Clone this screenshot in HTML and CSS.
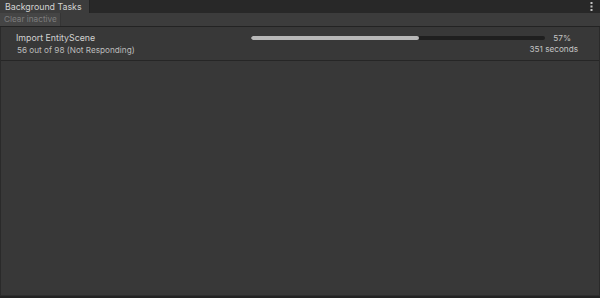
FILE: index.html
```html
<!DOCTYPE html>
<html lang="en">
<head>
<meta charset="UTF-8">
<meta name="viewport" content="width=device-width, initial-scale=1.0">
<title>Background Tasks</title>
<link rel="stylesheet" href="styles.css">
</head>
<body>
<div class="window">
    <div class="tabbar">
        <div class="tab">Background Tasks</div>
        <div class="menu">
            <svg width="3" height="9" viewBox="0 0 3 9">
                <rect x="0.5" y="0" width="2" height="2" fill="#c4c4c4"/>
                <rect x="0.5" y="3.5" width="2" height="2" fill="#c4c4c4"/>
                <rect x="0.5" y="7" width="2" height="2" fill="#c4c4c4"/>
            </svg>
        </div>
    </div>
    <div class="toolbar">
        <div class="btn">Clear inactive</div>
    </div>
    <div class="list">
        <div class="task">
            <div class="task-info">
                <div class="task-name">Import EntityScene</div>
                <div class="task-desc">56 out of 98 (Not Responding)</div>
            </div>
            <div class="task-progress">
                <div class="bar-line">
                    <div class="bar"><div class="fill" style="width: 57%"></div></div>
                    <div class="pct">57%</div>
                </div>
                <div class="time">351 seconds</div>
            </div>
        </div>
    </div>
</div>
</body>
</html>
```

FILE: styles.css
```css
body {
  margin: 0;
  padding: 0;
  background-color: #282828;
  font-family: Inter, "Noto Sans", sans-serif;
  font-size: 8.2px;
  color: #c4c4c4;
}

.window {
  width: 600px;
  height: 298px;
  display: flex;
  flex-direction: column;
  box-sizing: border-box;
  border-bottom: 2px solid #232323;
}

.tabbar {
  height: 13px;
  display: flex;
  justify-content: space-between;
  align-items: stretch;
  background-color: #282828;
}

.tab {
  background-color: #3c3c3c;
  padding: 0 7px 0 5px;
  line-height: 13px;
  font-size: 8.8px;
  color: #d2d2d2;
  border-right: 1px solid #232323;
}

.menu {
  display: flex;
  align-items: center;
  padding-right: 7px;
}

.toolbar {
  height: 13px;
  background-color: #3c3c3c;
  border-bottom: 1px solid #232323;
  display: flex;
}

.btn {
  background-color: #454545;
  color: #7d7d7d;
  padding: 0 3px 0 4px;
  line-height: 13px;
  font-size: 8.2px;
  border-right: 1px solid #353535;
}

.list {
  flex: 1;
  background-color: #383838;
  border-left: 1px solid #2a2a2a;
  border-right: 1px solid #2a2a2a;
  border-bottom: 1px solid #2e2e2e;
}

.task {
  display: flex;
  justify-content: space-between;
  padding: 5px 21px 4px 15px;
  height: 24px;
  border-bottom: 1px solid #262626;
}

.task-name {
  color: #d2d2d2;
  font-size: 8.8px;
  line-height: 12px;
}

.task-desc {
  color: #bcbcbc;
  line-height: 13px;
  padding-left: 1px;
}

.task-progress {
  width: 327px;
  display: flex;
  flex-direction: column;
  align-items: stretch;
}

.bar-line {
  display: flex;
  align-items: center;
  height: 12px;
}

.bar {
  width: 294px;
  height: 4px;
  background-color: #1f1f1f;
  border-radius: 2px;
  overflow: hidden;
}

.fill {
  height: 100%;
  background-color: #b8b8b8;
  border-radius: 2px;
}

.pct {
  flex: 1;
  text-align: right;
  padding-right: 7px;
}

.time {
  text-align: right;
  line-height: 13px;
}
```
